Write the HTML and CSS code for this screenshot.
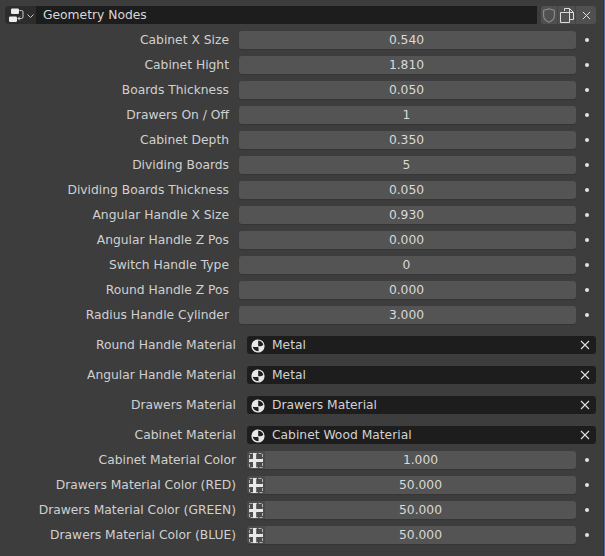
FILE: index.html
```html
<!DOCTYPE html>
<html lang="en">
<head>
<meta charset="utf-8">
<title>Geometry Nodes</title>
<link rel="stylesheet" href="styles.css">
</head>
<body>
<svg class="defs" width="0" height="0" aria-hidden="true">
  <symbol id="mat" viewBox="0 0 14 14">
    <circle cx="7" cy="7" r="6.600" fill="#e8e8e8"/>
    <path d="M7.200 1.600C9.800 1.800 12 3.700 12.300 5.800 10.800 7.400 8.600 7.600 7.200 7z" fill="#1f1f1f"/>
    <path d="M1.700 7.800C3.500 8 5.800 8.200 7.200 7.800 7.600 9.500 7.800 11 7.400 12.300 4.600 12.300 2.300 10.400 1.700 7.800z" fill="#1f1f1f"/>
  </symbol>
  <symbol id="x" viewBox="0 0 10 10">
    <path d="M1 1l8 8M9 1l-8 8" stroke="#e0e0e0" stroke-width="1.100" fill="none"/>
  </symbol>
  <symbol id="tex" viewBox="0 0 14 15">
    <path d="M.5.500h13.000v14H.5z" stroke="#b4b4b4" stroke-width="1" stroke-dasharray="3 1.500" fill="none"/>
    <path d="M4 0h3.200v6H14v3H7.200v6H4V9H0V6h4z" fill="#e8e8e8"/>
  </symbol>
</svg>
<main class="panel">
  <header class="head">
    <div class="type-btn">
      <svg class="type-icon" viewBox="0 0 15 15" width="15" height="15">
        <rect x="2" y="0.500" width="8" height="5.500" rx="1.200" fill="#ececec"/>
        <rect x="0" y="8.500" width="8" height="5.500" rx="1.200" fill="#ececec"/>
        <path d="M10.500 2.500h2a1.500 1.500 0 0 1 1.500 1.500v5a1.500 1.500 0 0 1-1.500 1.500H9M10.800 8.700 9 10.500l1.800 1.800" stroke="#cfcfcf" fill="none"/>
      </svg>
      <svg class="chev" viewBox="0 0 7 4" width="7" height="4"><path d="M.5.500 3.500 3.500 6.500.500" stroke="#c8c8c8" stroke-width="1" fill="none"/></svg>
    </div>
    <div class="name">Geometry Nodes</div>
    <div class="head-btns">
      <div class="hbtn shield"><svg viewBox="0 0 12 15" width="12" height="15"><path d="M6 .800 11.400 2.500V7.500C11.400 10.800 8.800 13 6 14.200 3.200 13 .6 10.800.6 7.500V2.500z" stroke="#8c8c8c" stroke-width="1.100" fill="none"/></svg></div>
      <div class="hbtn copy"><svg viewBox="0 0 14 15" width="14" height="15"><path d="M4.500 3V.5h5L13.500 4.500V11.500H9.500M9.500.5v4h4" stroke="#dcdcdc" fill="none"/><path d="M.5 4.500h9v10h-9z" stroke="#dcdcdc" fill="none"/></svg></div>
      <div class="hbtn close"><svg width="9" height="9" viewBox="0 0 10 10"><use href="#x"/></svg></div>
    </div>
  </header>

  <section class="rows">
    <div class="row"><span class="lbl">Cabinet X Size</span><div class="num">0.540</div><i class="dot"></i></div>
    <div class="row"><span class="lbl">Cabinet Hight</span><div class="num">1.810</div><i class="dot"></i></div>
    <div class="row"><span class="lbl">Boards Thickness</span><div class="num">0.050</div><i class="dot"></i></div>
    <div class="row"><span class="lbl">Drawers On / Off</span><div class="num">1</div><i class="dot"></i></div>
    <div class="row"><span class="lbl">Cabinet Depth</span><div class="num">0.350</div><i class="dot"></i></div>
    <div class="row"><span class="lbl">Dividing Boards</span><div class="num">5</div><i class="dot"></i></div>
    <div class="row"><span class="lbl">Dividing Boards Thickness</span><div class="num">0.050</div><i class="dot"></i></div>
    <div class="row"><span class="lbl">Angular Handle X Size</span><div class="num">0.930</div><i class="dot"></i></div>
    <div class="row"><span class="lbl">Angular Handle Z Pos</span><div class="num">0.000</div><i class="dot"></i></div>
    <div class="row"><span class="lbl">Switch Handle Type</span><div class="num">0</div><i class="dot"></i></div>
    <div class="row"><span class="lbl">Round Handle Z Pos</span><div class="num">0.000</div><i class="dot"></i></div>
    <div class="row"><span class="lbl">Radius Handle Cylinder</span><div class="num">3.000</div><i class="dot"></i></div>
  </section>

  <section class="mats">
    <div class="mat-row"><span class="lbl wide">Round Handle Material</span><div class="mat"><svg class="mat-icon" width="14" height="14"><use href="#mat"/></svg><span class="mat-name">Metal</span><svg class="mat-x" width="10" height="10" viewBox="0 0 10 10"><use href="#x"/></svg></div></div>
    <div class="mat-row"><span class="lbl wide">Angular Handle Material</span><div class="mat"><svg class="mat-icon" width="14" height="14"><use href="#mat"/></svg><span class="mat-name">Metal</span><svg class="mat-x" width="10" height="10" viewBox="0 0 10 10"><use href="#x"/></svg></div></div>
    <div class="mat-row"><span class="lbl wide">Drawers Material</span><div class="mat"><svg class="mat-icon" width="14" height="14"><use href="#mat"/></svg><span class="mat-name">Drawers Material</span><svg class="mat-x" width="10" height="10" viewBox="0 0 10 10"><use href="#x"/></svg></div></div>
    <div class="mat-row"><span class="lbl wide">Cabinet Material</span><div class="mat"><svg class="mat-icon" width="14" height="14"><use href="#mat"/></svg><span class="mat-name">Cabinet Wood Material</span><svg class="mat-x" width="10" height="10" viewBox="0 0 10 10"><use href="#x"/></svg></div></div>
  </section>

  <section class="rows tail">
    <div class="row"><span class="lbl wide">Cabinet Material Color</span><div class="attr"><div class="attr-icon"><svg width="14" height="15"><use href="#tex"/></svg></div><div class="num joined">1.000</div></div><i class="dot"></i></div>
    <div class="row"><span class="lbl wide">Drawers Material Color (RED)</span><div class="attr"><div class="attr-icon"><svg width="14" height="15"><use href="#tex"/></svg></div><div class="num joined">50.000</div></div><i class="dot"></i></div>
    <div class="row"><span class="lbl wide">Drawers Material Color (GREEN)</span><div class="attr"><div class="attr-icon"><svg width="14" height="15"><use href="#tex"/></svg></div><div class="num joined">50.000</div></div><i class="dot"></i></div>
    <div class="row"><span class="lbl wide">Drawers Material Color (BLUE)</span><div class="attr"><div class="attr-icon"><svg width="14" height="15"><use href="#tex"/></svg></div><div class="num joined">50.000</div></div><i class="dot"></i></div>
  </section>
</main>
</body>
</html>
```
FILE: styles.css
```css
* { box-sizing: border-box; }
html, body { margin: 0; height: 100%; }
body {
  background: #3d3d3d;
  color: #d9d9d9;
  font: 12.3px/18px "DejaVu Sans", sans-serif;
  overflow: hidden;
}
.defs { position: absolute; }
.panel {
  width: 605px;
  height: 556px;
  padding: 6px 8px 0 5px;
  border-right: 1px solid #4f6ea6;
  box-shadow: inset -1px 0 0 #343434;
}
.head { display: flex; height: 18px; }
.type-btn {
  width: 31px;
  display: flex;
  align-items: center;
  gap: 3px;
  padding-left: 4px;
  background: #2c2c2c;
  border-radius: 4px 0 0 4px;
}
.chev { margin-top: 1px; }
.name {
  width: 501px;
  padding-left: 7px;
  background: #1d1d1d;
  color: #d8d8d8;
}
.head-btns { display: flex; margin-left: 4px; }
.hbtn {
  display: flex;
  align-items: center;
  justify-content: center;
  background: #505050;
}
.shield { width: 16px; border-radius: 3px 0 0 3px; }
.copy { width: 19px; border-left: 1px solid #444; border-right: 1px solid #444; }
.close { width: 20px; border-radius: 0 3px 3px 0; }
.rows { margin-top: 7px; display: flex; flex-direction: column; gap: 7px; }
.row { display: flex; align-items: center; height: 18px; }
.lbl { width: 224px; text-align: right; white-space: nowrap; color: #d0d0d0; }
.lbl.wide { width: 231px; margin-right: 1px; }
.num {
  width: 337px;
  height: 18px;
  margin-left: 10px;
  padding-right: 2px;
  background: #545454;
  border-radius: 3px;
  box-shadow: 0 1px 1px #363636;
  text-align: center;
  color: #dadada;
}
.dot {
  width: 4px;
  height: 4px;
  margin-left: 9px;
  border-radius: 50%;
  background: #e4e4e4;
}
.mats { margin-top: 12px; display: flex; flex-direction: column; gap: 12px; }
.mat-row { display: flex; align-items: center; height: 18px; }
.mat {
  width: 349px;
  height: 18px;
  margin-left: 10px;
  display: flex;
  align-items: center;
  background: #1d1d1d;
  border-radius: 3px;
}
.mat-icon { margin-left: 4px; margin-top: 1px; }
.mat-name { margin-left: 7px; flex: 1; color: #d2d2d2; }
.mat-x { margin-right: 6px; }
.tail { margin-top: 7px; }
.attr { display: flex; margin-left: 10px; width: 329px; }
.attr-icon {
  width: 18px;
  height: 18px;
  display: flex;
  align-items: center;
  justify-content: center;
  background: #4c4c4c;
  border-radius: 3px 0 0 3px;
  box-shadow: 0 1px 1px #363636;
}
.num.joined { flex: 1; width: auto; margin-left: 0; padding-right: 0; border-radius: 0 3px 3px 0; }
```
